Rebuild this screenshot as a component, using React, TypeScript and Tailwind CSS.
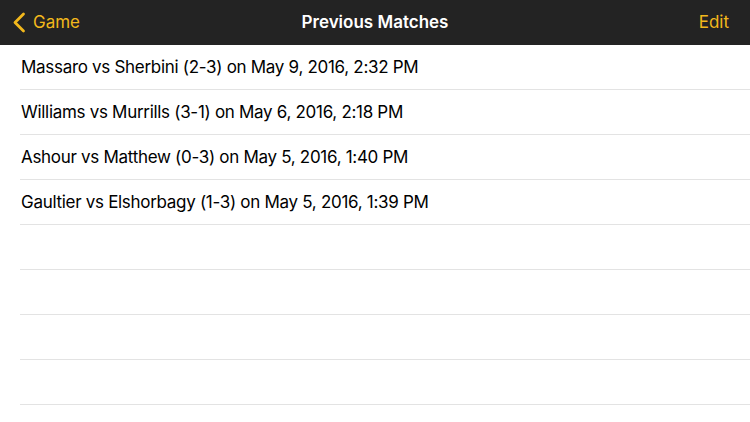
import React from 'react';

const MATCHES = [
  'Massaro vs Sherbini (2-3) on May 9, 2016, 2:32 PM',
  'Williams vs Murrills (3-1) on May 6, 2016, 2:18 PM',
  'Ashour vs Matthew (0-3) on May 5, 2016, 1:40 PM',
  'Gaultier vs Elshorbagy (1-3) on May 5, 2016, 1:39 PM',
];

const EMPTY_ROWS = 4;

export default function App() {
  return (
    <div className="w-[750px] h-[422px] overflow-hidden bg-white font-['Inter',sans-serif]">
      {/* Nav bar */}
      <div className="h-[45px] bg-[#232323] flex items-center justify-between relative">
        <button className="flex items-center gap-[7px] pl-[12px] text-[#f2b81c] text-[17px]">
          <svg width="14" height="21" viewBox="0 0 14 21" fill="none">
            <path d="M11.5 2 L3 10.5 L11.5 19" stroke="#f2b81c" strokeWidth="2.8" strokeLinecap="round" strokeLinejoin="round" />
          </svg>
          <span>Game</span>
        </button>
        <h1 className="absolute left-1/2 -translate-x-1/2 text-white text-[17px] font-semibold">
          Previous Matches
        </h1>
        <button className="pr-[21px] text-[#f2b81c] text-[17px]">Edit</button>
      </div>

      {/* List */}
      <div>
        {MATCHES.map((m) => (
          <div key={m} className="h-[45px] pl-[20px]">
            <div className="h-full flex items-center pt-[2px] border-b border-[#e3e3e3]">
              <span className="pl-[1px] text-[17px] text-black tracking-[-0.3px]">{m}</span>
            </div>
          </div>
        ))}
        {Array.from({ length: EMPTY_ROWS }).map((_, i) => (
          <div key={i} className="h-[45px] pl-[20px]">
            <div className="h-full border-b border-[#e3e3e3]" />
          </div>
        ))}
      </div>
    </div>
  );
}
